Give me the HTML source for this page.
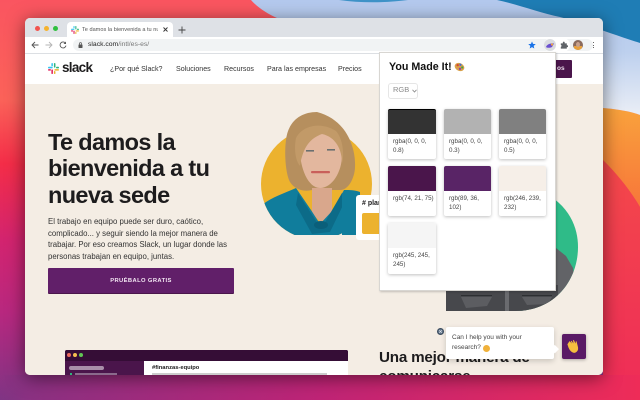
<!DOCTYPE html>
<html><head><meta charset="utf-8"><style>
*{box-sizing:border-box}
html,body{margin:0;padding:0;width:640px;height:400px;overflow:hidden;font-family:"Liberation Sans","DejaVu Sans",sans-serif;background:#c9267e}
.shadow{position:absolute;left:25px;top:18px;width:578px;height:357px;border-radius:5px;box-shadow:0 3px 18px rgba(0,0,0,.5)}
.clip{position:absolute;left:25px;top:18px;width:578px;height:357px;border-radius:5px;overflow:hidden;background:#f4ede4}
.in{position:absolute;left:-25px;top:-18px;width:640px;height:400px}
.in *{position:absolute}
.in span.s,.in br{position:static}
.t{white-space:nowrap}
.nav{font-size:7.1px;color:#333;top:64px;line-height:10px}
.card{width:48px;background:#fff;border-radius:2px;box-shadow:0 1px 3px rgba(0,0,0,.25)}
.card i{left:0;top:0;width:48px;height:25px;border-radius:2px 2px 0 0}
.card b{left:5px;top:29px;font-weight:400;font-size:6.2px;line-height:8.6px;color:#444;white-space:nowrap}
</style></head><body>
<svg width="640" height="400" style="position:absolute;left:0;top:0">
<defs>
<linearGradient id="l" x1="0" y1="0" x2="0" y2="1">
<stop offset="0" stop-color="#fa5560"/><stop offset=".25" stop-color="#fb6259"/><stop offset=".41" stop-color="#f42d48"/><stop offset=".6" stop-color="#d3246f"/><stop offset=".78" stop-color="#b8287f"/><stop offset="1" stop-color="#7f3484"/></linearGradient>
<linearGradient id="b" x1="0" y1="0" x2="1" y2="0">
<stop offset="0" stop-color="#84337f" stop-opacity="0"/><stop offset=".04" stop-color="#8a3182"/><stop offset=".5" stop-color="#bf2476"/><stop offset="1" stop-color="#ee2c58"/></linearGradient>
<linearGradient id="o" x1="0" y1="0" x2="0" y2="1">
<stop offset="0" stop-color="#f9a23c"/><stop offset="1" stop-color="#f7763a"/></linearGradient>
<linearGradient id="sk" x1="0" y1="0" x2="0" y2="1">
<stop offset="0" stop-color="#b4c9ee"/><stop offset=".45" stop-color="#bdd0ee"/><stop offset="1" stop-color="#eaeef6"/></linearGradient>
<linearGradient id="r" x1="0" y1="0" x2="0" y2="1">
<stop offset="0" stop-color="#f4484a"/><stop offset="1" stop-color="#ee2c58"/></linearGradient>
</defs>
<rect width="640" height="400" fill="url(#l)"/>
<path d="M603 160C618 175 630 190 640 207V400H603Z" fill="url(#r)"/>
<rect x="0" y="375" width="640" height="25" fill="url(#b)"/>
<path d="M603 108C615 109 630 111 640 115V207C630 190 618 175 603 160Z" fill="url(#o)"/>
<path d="M251 0C258 8 268 14 277 18H603V108C615 109 630 111 640 115V0Z" fill="url(#sk)"/>
<path d="M497 0C520 5 540 13 560 17C580 22 600 30 640 43V0Z" fill="#1f7db5"/>
<path d="M339 0C360 3 385 3 408 0Z" fill="#3f93c8"/>
</svg>
<div class="shadow"></div>
<div class="clip"><div class="in">
 <!-- chrome -->
 <div style="left:25px;top:18px;width:578px;height:19px;background:#dee1e6"></div>
 <div style="left:67px;top:22px;width:106px;height:15px;background:#fff;border-radius:4px 4px 0 0"></div>
 <div style="left:25px;top:37px;width:578px;height:16px;background:#fff"></div>
 <div style="left:73px;top:39px;width:520px;height:12px;border-radius:6px;background:#f1f3f4"></div>
 <div style="left:544px;top:38px;width:26px;height:14px;border-radius:7px;background:#fff"></div>
 <div style="left:25px;top:53px;width:578px;height:1px;background:#dcdfe3"></div>
 <div style="left:25px;top:54px;width:578px;height:30px;background:#fff"></div>
 <div style="left:25px;top:84px;width:578px;height:291px;background:#f4ede4"></div>

 <div style="left:34.500px;top:25.500px;width:5px;height:5px;border-radius:50%;background:#f2544f"></div>
 <div style="left:43.500px;top:25.500px;width:5px;height:5px;border-radius:50%;background:#f5b32f"></div>
 <div style="left:52.500px;top:25.500px;width:5px;height:5px;border-radius:50%;background:#30c03f"></div>

 <svg style="left:71px;top:26px" width="8" height="8" viewBox="0 0 13 13"><rect x="0" y="4.500" width="5.500" height="1.800" rx=".9" fill="#36c5f0"/><rect x="4" y="0" width="1.800" height="4" rx=".9" fill="#36c5f0"/><rect x="7" y="0" width="1.800" height="5.500" rx=".9" fill="#2eb67d"/><rect x="9.500" y="4.500" width="3.500" height="1.800" rx=".9" fill="#2eb67d"/><rect x="7.500" y="7.200" width="5.500" height="1.800" rx=".9" fill="#ecb22e"/><rect x="7" y="9.500" width="1.800" height="3.500" rx=".9" fill="#ecb22e"/><rect x="4" y="7.500" width="1.800" height="5.500" rx=".9" fill="#e01e5a"/><rect x="0" y="7.200" width="3.500" height="1.800" rx=".9" fill="#e01e5a"/></svg>
 <div class="t" style="left:82px;top:25px;font-size:5.600px;line-height:10px;color:#555;width:76px;overflow:hidden">Te damos la bienvenida a tu nu</div>
 <svg style="left:162.500px;top:27px" width="5" height="5" viewBox="0 0 5 5"><path d="M.5 .5L4.500 4.500M4.500 .5L.5 4.500" stroke="#333" stroke-width=".9"/></svg>
 <svg style="left:178px;top:25.500px" width="8" height="8" viewBox="0 0 8 8"><path d="M4 .5V7.500M.5 4H7.500" stroke="#444" stroke-width=".9"/></svg>
 <svg style="left:31px;top:41px" width="8" height="8" viewBox="0 0 8 8"><path d="M7.500 4H1M4 1L1 4L4 7" fill="none" stroke="#555" stroke-width=".9"/></svg>
 <svg style="left:45px;top:41px" width="8" height="8" viewBox="0 0 8 8"><path d="M.5 4H7M4 1L7 4L4 7" fill="none" stroke="#b5b5b5" stroke-width=".9"/></svg>
 <svg style="left:59px;top:41px" width="8" height="8" viewBox="0 0 8 8"><path d="M6.500 2.200A3 3 0 1 0 7 4.600" fill="none" stroke="#555" stroke-width=".9"/><path d="M7 .5V3H4.500Z" fill="#555"/></svg>
 <svg style="left:78px;top:42px" width="5" height="6" viewBox="0 0 5 6"><rect x=".5" y="2.500" width="4" height="3.500" rx=".5" fill="#555"/><path d="M1.400 2.500V1.700A1.100 1.100 0 0 1 3.600 1.700V2.500" fill="none" stroke="#555" stroke-width=".7"/></svg>
 <div class="t" style="left:88px;top:40px;font-size:6.800px;line-height:10px;color:#222">slack.com<span class="s" style="color:#777">/intl/es-es/</span></div>
 <svg style="left:528px;top:41px" width="8" height="8" viewBox="0 0 10 10"><path d="M5 .5L6.300 3.600L9.700 3.900L7.100 6.100L7.900 9.400L5 7.700L2.100 9.400L2.900 6.100L.3 3.900L3.700 3.600Z" fill="#1a73e8"/></svg>
 <div style="left:544px;top:39px;width:12px;height:12px;border-radius:50%;background:#dadce0"></div>
 <svg style="left:546px;top:42.500px" width="8" height="5" viewBox="0 0 8 5"><path d="M0 4C1 1 5 0 8 .5L6 4C4 5 1 5 0 4Z" fill="#6a4fd0"/><circle cx="6" cy="1.500" r="1.100" fill="#f2a53a"/></svg>
 <svg style="left:560px;top:41px" width="8" height="8" viewBox="0 0 10 10"><path d="M1 3H3.500V2A1.200 1.200 0 0 1 5.900 2V3H8.500V5.300H9A1.200 1.200 0 0 1 9 7.700H8.500V9.500H1V7.400A1.300 1.300 0 0 0 1 4.900Z" fill="#5f6368"/></svg>
 <div style="left:573px;top:40px;width:10px;height:10px;border-radius:50%;background:#8a6a5c;overflow:hidden"><div style="left:1px;top:6px;width:8px;height:4px;background:#e8a03c"></div><div style="left:3px;top:2px;width:4px;height:5px;border-radius:50%;background:#c9a08a"></div></div>
 <div style="left:592.500px;top:42px;width:1.200px;height:1.200px;background:#666"></div>
 <div style="left:592.500px;top:44.500px;width:1.200px;height:1.200px;background:#666"></div>
 <div style="left:592.500px;top:47px;width:1.200px;height:1.200px;background:#666"></div>

 <!-- slack nav -->
 <svg style="left:48px;top:63px" width="11" height="11" viewBox="0 0 13 13"><rect x="0" y="4.500" width="5.500" height="1.800" rx=".9" fill="#36c5f0"/><rect x="4" y="0" width="1.800" height="4" rx=".9" fill="#36c5f0"/><rect x="7" y="0" width="1.800" height="5.500" rx=".9" fill="#2eb67d"/><rect x="9.500" y="4.500" width="3.500" height="1.800" rx=".9" fill="#2eb67d"/><rect x="7.500" y="7.200" width="5.500" height="1.800" rx=".9" fill="#ecb22e"/><rect x="7" y="9.500" width="1.800" height="3.500" rx=".9" fill="#ecb22e"/><rect x="4" y="7.500" width="1.800" height="5.500" rx=".9" fill="#e01e5a"/><rect x="0" y="7.200" width="3.500" height="1.800" rx=".9" fill="#e01e5a"/></svg>
 <div class="t" style="left:62px;top:60px;font-size:13.500px;font-weight:700;line-height:16px;letter-spacing:-.7px;color:#1d1c1d">slack</div>
 <div class="t nav" style="left:110px">¿Por qué Slack?</div>
 <div class="t nav" style="left:176px">Soluciones</div>
 <div class="t nav" style="left:224px">Recursos</div>
 <div class="t nav" style="left:267px">Para las empresas</div>
 <div class="t nav" style="left:338px">Precios</div>
 <div style="left:540px;top:60px;width:32px;height:18px;background:#4a154b;border-radius:1px"></div>

 <!-- Hero text -->
 <div class="t" style="left:48px;top:128.500px;font-size:23.500px;font-weight:700;line-height:26.500px;letter-spacing:-.65px;color:#1d1c1d">Te damos la<br>bienvenida a tu<br>nueva sede</div>
 <div class="t" style="left:48px;top:216.300px;font-size:7.800px;line-height:11.400px;color:#333">El trabajo en equipo puede ser duro, caótico,<br>complicado... y seguir siendo la mejor manera de<br>trabajar. Por eso creamos Slack, un lugar donde las<br>personas trabajan en equipo, juntas.</div>
 <div style="left:48px;top:268px;width:186px;height:25px;background:#611f69;border-radius:1px;box-shadow:0 1px 0 #4a154b"></div>
 <div class="t" style="left:48px;top:269px;width:186px;height:25px;line-height:25px;text-align:center;font-size:5.800px;font-weight:700;color:#f3e6f3;letter-spacing:.4px">PRUÉBALO GRATIS</div>

 <!-- Portrait -->
 <svg style="left:255px;top:105px" width="125" height="135" viewBox="255 105 125 135">
  <clipPath id="cp"><circle cx="316.500" cy="184" r="55.500"/></clipPath>
  <clipPath id="cb"><path d="M255 105H380V235H255Z"/></clipPath>
  <g clip-path="url(#cb)">
   <circle cx="316.500" cy="184" r="55.500" fill="#ecb22e"/>
   <path d="M317 112C300 112 288 122 286 140C284 155 286 175 290 182C295 190 305 192 312 190H340C350 190 355 175 355 167C356 150 348 120 317 112Z" fill="#b68f5e"/>
   <path d="M312 188H332V214L321 222L312 214Z" fill="#d9a78c"/>
   <path d="M300 150C300 135 312 128 326 128C338 130 342 140 342 155C342 172 332 188 320 188C308 188 300 168 300 150Z" fill="#e3b79e"/>
   <path d="M296 138C302 126 320 121 336 131C344 140 344 158 342 163C342 150 336 137 322 134C311 138 303 146 300 166C295 160 294 148 296 138Z" fill="#c29a68"/>
   <rect x="311" y="171" width="19" height="2.200" rx="1" fill="#c9605a"/>
   <rect x="306" y="150" width="8" height="1.600" fill="#6a6f70"/><rect x="327" y="149" width="8" height="1.600" fill="#6a6f70"/>
   <g clip-path="url(#cp)">
    <path d="M262 205C272 197 285 193 296 188L311 210L320 224L333 210L344 190C350 190 355 190 360 192V240H262Z" fill="#107d9c"/>
    <path d="M298 193L318 224H324L342 193L346 199L330 232L312 234L296 205Z" fill="#0c6b88"/>
    <ellipse cx="321" cy="225" rx="7" ry="4" fill="#0a5f7a"/>
   </g>
   <rect x="342" y="193" width="16" height="42" fill="#107d9c"/>
  </g>
 </svg>
 <div style="left:356px;top:195px;width:24px;height:45px;background:#fff;border-radius:3px 0 0 3px"></div>
 <div class="t" style="left:362px;top:199px;font-size:7px;font-weight:700;color:#1d1c1d;line-height:10px;width:18px;overflow:hidden"># plan</div>
 <div style="left:362px;top:213px;width:18px;height:21px;background:#ecb22e;border-radius:2px 0 0 2px"></div>

 <!-- green blob and man -->
 <svg style="left:440px;top:190px" width="145" height="125" viewBox="440 190 145 125">
  <clipPath id="gb"><path d="M540 190C570 205 578 228 578 247C578 280 555 311 515 311H446V190Z"/></clipPath>
  <path d="M540 190C570 205 578 228 578 247C578 280 555 311 515 311H500V190Z" fill="#2fbb88"/>
  <g clip-path="url(#gb)">
   <path d="M556 248L566 256L573 268L580 320H446V270H556Z" fill="#626367"/>
   <rect x="446" y="285" width="112" height="30" fill="#47484c"/>
   <path d="M461 297H492L487 306L466 308Z" fill="#5c5d61"/>
   <path d="M522 297H552L548 304L527 305Z" fill="#5c5d61"/>
   <path d="M461 295.500H492M522 295.500H552" stroke="#26272a" stroke-width=".8"/>
   <rect x="505" y="290" width="4" height="25" fill="#6a6b6f"/>
  </g>
 </svg>

 <!-- bottom mock -->
 <div style="left:65px;top:350px;width:283px;height:25px;background:#4a154b;border-radius:2px 2px 0 0;overflow:hidden">
  <div style="left:0;top:0;width:283px;height:11px;background:#350d36"></div>
  <div style="left:2px;top:3px;width:4px;height:4px;border-radius:50%;background:#ed6a5e"></div>
  <div style="left:7.500px;top:3px;width:4px;height:4px;border-radius:50%;background:#f4bf4f"></div>
  <div style="left:13.500px;top:3px;width:4px;height:4px;border-radius:50%;background:#61c554"></div>
  <div style="left:4px;top:16px;width:35px;height:4px;border-radius:2px;background:#a98fa9"></div>
  <div style="left:10px;top:23px;width:42px;height:2px;background:#8a6a8c"></div>
  <div style="left:5px;top:23px;width:2px;height:2px;background:#2eb67d"></div>
  <div style="left:79px;top:11px;width:204px;height:14px;background:#fff"></div>
  <div class="t" style="left:87px;top:13px;font-size:5.800px;font-weight:700;line-height:10px;color:#1d1c1d">#finanzas-equipo</div>
  <div style="left:87px;top:23px;width:175px;height:1.500px;background:#ccc"></div>
 </div>

 <!-- right heading -->
 <div class="t" style="left:379px;top:348px;font-size:15.200px;font-weight:700;line-height:20px;letter-spacing:-.2px;color:#1d1c1d">Una mejor manera de</div>
 <div class="t" style="left:379px;top:367px;font-size:15.200px;font-weight:700;line-height:20px;letter-spacing:-.2px;color:#1d1c1d">comunicarse</div>

 <!-- popup -->
 <div style="left:379px;top:52px;width:177px;height:239px;background:#fff;border:1px solid #d8d6d2;box-shadow:1px 1px 2px rgba(0,0,0,.2)"></div>
 <div class="t" style="left:389px;top:60px;font-size:10.700px;font-weight:700;line-height:14px;color:#111">You Made It!</div>
 <svg style="left:454px;top:62px" width="11" height="10" viewBox="0 0 12 11"><ellipse cx="6" cy="5.500" rx="5.500" ry="4.200" fill="#d8a04a" transform="rotate(25 6 5.500)"/><circle cx="4" cy="3.500" r="1.300" fill="#d9442f"/><circle cx="7" cy="3" r="1.200" fill="#3f6fd8"/><circle cx="9" cy="6" r="1.200" fill="#43a047"/><circle cx="6.500" cy="7.500" r="1.300" fill="#8e44ad"/></svg>
 <div style="left:388px;top:83px;width:30px;height:16px;border:1px solid #e6e6e6;border-radius:3px;background:#fff"></div>
 <div class="t" style="left:393px;top:85px;font-size:7.500px;line-height:10px;color:#8a8a8a">RGB</div>
 <svg style="left:412px;top:88.500px" width="5" height="4" viewBox="0 0 5 4"><path d="M.5 .8L2.500 3L4.500 .8" fill="none" stroke="#888" stroke-width=".8"/></svg>

 <div class="card" style="left:388px;top:109px;height:50px"><i style="background:#333;border-top:1px solid #000"></i><b>rgba(0, 0, 0,<br>0.8)</b></div>
 <div class="card" style="left:444px;top:109px;height:50px;width:47px"><i style="background:#b2b2b2;width:47px"></i><b>rgba(0, 0, 0,<br>0.3)</b></div>
 <div class="card" style="left:499px;top:109px;height:50px;width:47px"><i style="background:#808080;width:47px"></i><b>rgba(0, 0, 0,<br>0.5)</b></div>
 <div class="card" style="left:388px;top:166px;height:50px"><i style="background:#4a154b"></i><b>rgb(74, 21, 75)</b></div>
 <div class="card" style="left:444px;top:166px;height:50px;width:47px"><i style="background:#592466;width:47px"></i><b>rgb(89, 36,<br>102)</b></div>
 <div class="card" style="left:499px;top:166px;height:50px;width:47px"><i style="background:#f6efe8;width:47px"></i><b>rgb(246, 239,<br>232)</b></div>
 <div class="card" style="left:388px;top:223px;height:51px"><i style="background:#f5f5f5"></i><b>rgb(245, 245,<br>245)</b></div>

 <div class="t" style="left:557px;top:64px;font-size:6.500px;font-weight:700;line-height:10px;color:#e8dce8">os</div>

 <!-- chat -->
 <div style="left:446px;top:327px;width:108px;height:32px;background:#fff;border-radius:2px;box-shadow:0 2px 6px rgba(0,0,0,.18)"></div>
 <div style="left:551.500px;top:346px;width:5.500px;height:5.500px;background:#fff;transform:rotate(45deg)"></div>
 <div class="t" style="left:452px;top:333px;font-size:6.500px;line-height:10.300px;color:#444">Can I help you with your<br>research?</div>
 <div style="left:482.500px;top:344.500px;width:7px;height:7px;border-radius:50%;background:#f0b13a"></div>
 <div style="left:562px;top:334px;width:24px;height:25px;background:#5a1a66;border-radius:2px;box-shadow:0 1px 3px rgba(0,0,0,.3)"></div>
 <svg style="left:567px;top:339px" width="14" height="15" viewBox="0 0 16 17"><path d="M3 3L7 8L5 2.500L8 7L7.500 1.500L10 7L10.500 3L12 9C13 13 10 16 7 15C4 14 2 10 1 6Z" fill="#f5bf3f" stroke="#f5bf3f" stroke-linejoin="round"/></svg>
 <div style="left:436.500px;top:327.500px;width:7px;height:7px;border-radius:50%;background:#5f7388;border:1px solid #3c4c5e"></div>
 <svg style="left:436.500px;top:327.500px" width="7" height="7" viewBox="0 0 7 7"><path d="M2.200 2.200L4.800 4.800M4.800 2.200L2.200 4.800" stroke="#dfe5ec" stroke-width=".7"/></svg>
</div></div>
</body></html>
